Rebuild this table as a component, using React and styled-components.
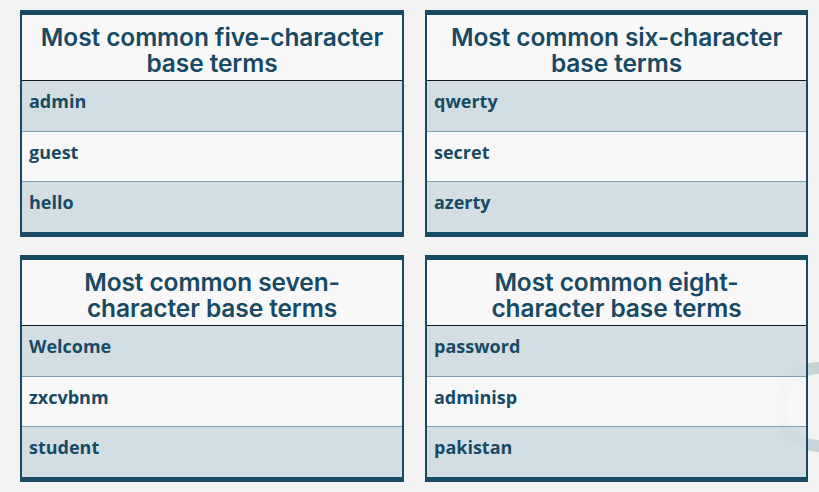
import styled, { createGlobalStyle } from "styled-components";

const navy = "#184a63";

const GlobalStyle = createGlobalStyle`
	html, body {
		margin: 0;
		padding: 0;
		background: #f2f2f2;
	}
	body {
		width: 819px;
		height: 492px;
		overflow: hidden;
		position: relative;
	}
`;

const tables = [
	{ title: ["Most common five-character", "base terms"], terms: ["admin", "guest", "hello"] },
	{ title: ["Most common six-character", "base terms"], terms: ["qwerty", "secret", "azerty"] },
	{ title: ["Most common seven-", "character base terms"], terms: ["Welcome", "zxcvbnm", "student"] },
	{ title: ["Most common eight-", "character base terms"], terms: ["password", "adminisp", "pakistan"] },
];

const TermTable = ({ title, terms }) => {
	return (
		<Card>
			<Header>
				{title.map((line) => (
					<span key={line}>{line}</span>
				))}
			</Header>
			{terms.map((term, i) => (
				<Row key={term} $shaded={i % 2 === 0}>
					{term}
				</Row>
			))}
		</Card>
	);
};

export default function App() {
	return (
		<>
			<GlobalStyle />
			<Page>
				{tables.map((t) => (
					<TermTable key={t.title[0]} title={t.title} terms={t.terms} />
				))}
			</Page>
			{/* faint logo watermark peeking in from the right edge */}
			<Watermark viewBox="0 0 43 90" width="43" height="90">
				<path d="M43 6 A39 39 0 0 0 43 84" fill="none" stroke="#c6d4d7" strokeWidth="12" />
			</Watermark>
		</>
	);
}

const Page = styled.div`
	display: grid;
	grid-template-columns: 384px 383px;
	grid-auto-rows: 227px;
	column-gap: 21px;
	row-gap: 18px;
	padding: 10px 0 0 20px;
	position: relative;
	z-index: 1;
`;

const Card = styled.div`
	display: flex;
	flex-direction: column;
	border-style: solid;
	border-color: ${navy};
	border-width: 5px 2px 5px 2px;
	box-sizing: border-box;
`;

const Header = styled.div`
	height: 66px;
	flex: none;
	box-sizing: border-box;
	padding-top: 9px;
	border-bottom: 1.5px solid #151b1f;
	display: flex;
	flex-direction: column;
	align-items: center;
	font-family: Inter, "Liberation Sans", sans-serif;
	font-weight: 600;
	font-size: 24.5px;
	line-height: 26px;
	letter-spacing: -0.1px;
	color: ${navy};
	background: #f8f8f8;
`;

const Row = styled.div`
	flex: 1;
	box-sizing: border-box;
	padding: 8px 0 0 7px;
	font-family: "Open Sans", "Liberation Sans", sans-serif;
	font-weight: 700;
	font-size: 18px;
	color: ${navy};
	background: ${(p) => (p.$shaded ? "rgba(207, 219, 226, 0.9)" : "rgba(247, 247, 247, 0.9)")};

	& + & {
		border-top: 1px solid #7f9fb3;
	}
`;

const Watermark = styled.svg`
	position: absolute;
	left: 776px;
	top: 362px;
	z-index: 0;
`;
